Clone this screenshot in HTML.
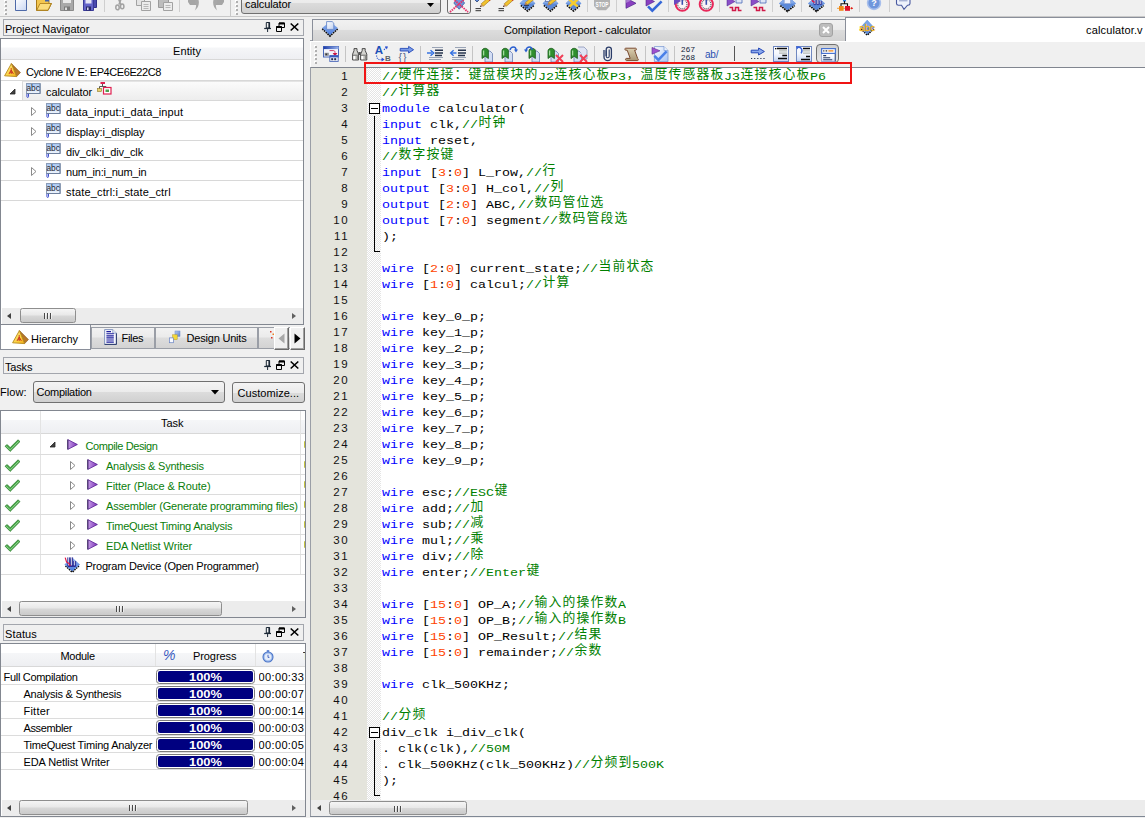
<!DOCTYPE html>
<html lang="en"><head><meta charset="utf-8"><title>Quartus II - calculator</title>
<style>
html,body{margin:0;padding:0}
body{width:1145px;height:818px;overflow:hidden;background:#f0f0f0;position:relative;font:11px/20px "Liberation Sans",sans-serif;color:#000}
div,span.t,i,b.a{position:absolute;box-sizing:content-box}
.t{white-space:nowrap;line-height:20px;height:20px}
svg{display:block;overflow:visible}

#code{left:311px;top:68px;width:834px;height:732px;background:#fff;overflow:hidden}
#gut{left:0;top:0;width:56px;height:732px;background:#e4e4dc}
#fm{left:56px;top:0;width:14px;height:732px;background:repeating-conic-gradient(#fff 0 25%,#e4e4e4 0 50%) 0 0/2px 2px}
.ln{left:0;width:38.2px;height:16px;text-align:right;font:11.5px/16px "Liberation Sans",sans-serif;letter-spacing:1.6px;color:#111;margin-top:-.5px}
.cl{left:71px;height:16px;margin-top:1px;white-space:pre;font:13.333px/16px "Liberation Mono",monospace;color:#000;transform:scaleY(.88);transform-origin:0 11px}
.k{color:#0000ff}.c{color:#008000}.n{color:#ff4500}
.z{display:inline-block;position:relative;height:16px;vertical-align:top}
.zt{position:absolute;left:.6px;top:-4.1px;height:16px;line-height:16px;white-space:nowrap;font-family:"Liberation Mono","Noto Sans CJK SC",monospace;font-size:12.8px;letter-spacing:1.2px;color:inherit;transform:scaleY(1.1367);transform-origin:0 0}
.fb{left:58px;width:9px;height:9px;border:1px solid #000;background:#fff}
.fb i{position:absolute;left:1px;top:4px;width:7px;height:1px;background:#000}
.fl{left:63px;width:1px;background:#000}
.ft{left:63px;width:6px;height:1px;background:#000}

.ic{position:absolute}
#tsep{left:0;top:16px;width:1145px;height:1px;background:#c9c9c9}
.vs{width:1px;background:#cfcfcf}
.combo{border:1px solid #707070;border-radius:3px;background:linear-gradient(#f4f4f4,#ebebeb 50%,#dcdcdc 51%,#d0d0d0)}
#tabbar{left:310px;top:40px;width:835px;height:1px;background:#9a9ea6}
#tab1{left:312px;top:19px;width:532px;height:21px;border:1px solid #8a8f9a;border-bottom:0;background:linear-gradient(#f1f1f1,#ebebeb 45%,#dcdcdc 50%,#d2d2d2)}
#tab2{left:845px;top:17px;width:300px;height:24px;border-top:1px solid #8a8f9a;border-left:1px solid #8a8f9a;background:#fff}
#etb{left:310px;top:41px;width:835px;height:26px;background:#f0f0f0;border-top:1px solid #fff;border-left:1px solid #fff;box-sizing:border-box}
#etbl{left:310px;top:67px;width:835px;height:1px;background:#80858f}
#edl{left:310px;top:67px;width:1px;height:750px;background:#9a9ea6}
#edb{left:310px;top:816px;width:835px;height:1px;background:#7f8794}
#hsb{left:311px;top:800px;width:834px;height:16px;background:#ececec}
.thumb{border:1px solid #8e8e8e;border-radius:2.5px;background:linear-gradient(#f5f5f5,#e8e8e8 48%,#d8d8d8 52%,#cacaca);box-sizing:border-box}
.thumb i{top:4px;width:1px;height:6px;background:#4a4a4a;box-shadow:1px 0 0 rgba(255,255,255,.55)}
.arl{width:0;height:0;border:3.5px solid transparent;border-right:4.5px solid #404040;border-left:0;margin-top:.5px}
.arr{width:0;height:0;border:3.5px solid transparent;border-left:4.5px solid #404040;border-right:0;margin-top:.5px}
.xbtn{left:819px;top:23px;width:14px;height:14px;border-radius:3px;background:#bdbdbd;border:1px solid #a2a2a2;box-sizing:border-box}
.pressed{border:1px solid #6c6c6c;border-radius:3px;background:linear-gradient(#d8d8d8,#e6e6e6);box-sizing:border-box}

.ttl{left:3px;width:299px;height:15px;border:1px solid #a3a6ad;background:#f0f0f0}
.pane{background:#fff;border:1px solid #828790;box-sizing:border-box;overflow:hidden}
.hdr{left:0;background:linear-gradient(#fff,#fff 42%,#f5f6f8 43%,#eeeff2);border-bottom:1px solid #d8d8d8}
.rl{left:0;height:1px;background:#dcdcdc}
.cs{width:1px;background:#e3e3e3}
.sb{background:#ececec}
.tabA{left:0;top:325px;width:91px;height:25px;background:#fff;border:1px solid #8a8f9a;border-top:0;box-sizing:border-box}
.tabI{top:327px;height:22px;border:1px solid #9a9ea6;box-sizing:border-box;background:linear-gradient(#f2f2f2,#ebebeb 45%,#dddddd 50%,#d3d3d3)}
.btn3{top:327px;width:15px;height:23px;background:#f0f0f0;border:1px solid;border-color:#fff #696969 #696969 #fff;box-sizing:border-box;box-shadow:inset -1px -1px 0 #a0a0a0}
.btn{border:1px solid #707070;border-radius:3px;background:linear-gradient(#f4f4f4,#ebebeb 50%,#dcdcdc 51%,#d0d0d0);box-sizing:border-box}
.g{color:#0a7d0a}
.pb{left:156px;width:99px;height:15px;border:1px solid #7c7c7c;border-radius:3.5px;background:#fff;box-sizing:border-box}
.pb i{left:1px;top:1px;width:95px;height:11px;background:#000080;border-radius:2px}
.pb b{position:absolute;left:0;width:97px;top:-3.5px;text-align:center;color:#fff;font-weight:bold;font-size:11px;line-height:20px;transform:scaleX(1.17)}
</style></head>
<body>
<svg width="0" height="0" style="position:absolute"><defs><linearGradient id="gnew" x1="0" y1="0" x2="1" y2="1"><stop offset="0" stop-color="#fff"/><stop offset="1" stop-color="#c9d6f2"/></linearGradient><linearGradient id="gdi" x1="0" y1="0" x2="0" y2="1"><stop offset="0" stop-color="#9ab8ec"/><stop offset="1" stop-color="#4a7ce0"/></linearGradient><linearGradient id="gpp" x1="0" y1="0" x2="1" y2="1"><stop offset="0" stop-color="#fff"/><stop offset="1" stop-color="#c0d0f0"/></linearGradient><linearGradient id="gtb" x1="0" y1="0" x2="1" y2="0"><stop offset="0" stop-color="#1c3ca8"/><stop offset="1" stop-color="#9ab4ec"/></linearGradient><linearGradient id="gsc" x1="0" y1="0" x2="0" y2="1"><stop offset="0" stop-color="#dccfb0"/><stop offset="1" stop-color="#a89674"/></linearGradient><linearGradient id="gpg" x1="0" y1="0" x2="1" y2="1"><stop offset="0" stop-color="#fff"/><stop offset="1" stop-color="#a8c4f4"/></linearGradient><linearGradient id="glist" x1="0" y1="0" x2="0" y2="1"><stop offset="0" stop-color="#fff"/><stop offset=".5" stop-color="#f4f7fd"/><stop offset="1" stop-color="#c4d4f2"/></linearGradient><linearGradient id="gw" x1="0" y1="0" x2="1" y2="1"><stop offset="0" stop-color="#fff0a0"/><stop offset=".6" stop-color="#fbd040"/><stop offset="1" stop-color="#f0a818"/></linearGradient><linearGradient id="gabc" x1="0" y1="0" x2="0" y2="1"><stop offset="0" stop-color="#a4c4f0"/><stop offset=".55" stop-color="#d4e4f8"/><stop offset="1" stop-color="#eef4fc"/></linearGradient><linearGradient id="gdu" x1="0" y1="0" x2="1" y2="1"><stop offset="0" stop-color="#b8ccf0"/><stop offset="1" stop-color="#5a7ed0"/></linearGradient><linearGradient id="gpl" x1="0" y1="0" x2="1" y2="0"><stop offset="0" stop-color="#c9a0e8"/><stop offset="1" stop-color="#7a2fb8"/></linearGradient></defs></svg>
<div id="code">
<div id="gut"></div><div id="fm"></div>
<div class="ln" style="top:0px">1</div>
<div class="cl" style="top:0px"><span class="c">//<span class="z" style="width:140px"><span class="zt">硬件连接：键盘模块的</span></span>J2<span class="z" style="width:56px"><span class="zt">连核心板</span></span>P3<span class="z" style="width:98px"><span class="zt">，温度传感器板</span></span>J3<span class="z" style="width:70px"><span class="zt">连接核心板</span></span>P6</span></div>
<div class="ln" style="top:16px">2</div>
<div class="cl" style="top:16px"><span class="c">//<span class="z" style="width:42px"><span class="zt">计算器</span></span></span></div>
<div class="ln" style="top:32px">3</div>
<div class="cl" style="top:32px"><span class="k">module</span> calculator(</div>
<div class="ln" style="top:48px">4</div>
<div class="cl" style="top:48px"><span class="k">input</span> clk,<span class="c">//<span class="z" style="width:28px"><span class="zt">时钟</span></span></span></div>
<div class="ln" style="top:64px">5</div>
<div class="cl" style="top:64px"><span class="k">input</span> reset,</div>
<div class="ln" style="top:80px">6</div>
<div class="cl" style="top:80px"><span class="c">//<span class="z" style="width:56px"><span class="zt">数字按键</span></span></span></div>
<div class="ln" style="top:96px">7</div>
<div class="cl" style="top:96px"><span class="k">input</span> [<span class="n">3</span>:<span class="n">0</span>] L_row,<span class="c">//<span class="z" style="width:14px"><span class="zt">行</span></span></span></div>
<div class="ln" style="top:112px">8</div>
<div class="cl" style="top:112px"><span class="k">output</span> [<span class="n">3</span>:<span class="n">0</span>] H_col,<span class="c">//<span class="z" style="width:14px"><span class="zt">列</span></span></span></div>
<div class="ln" style="top:128px">9</div>
<div class="cl" style="top:128px"><span class="k">output</span> [<span class="n">2</span>:<span class="n">0</span>] ABC,<span class="c">//<span class="z" style="width:70px"><span class="zt">数码管位选</span></span></span></div>
<div class="ln" style="top:144px">10</div>
<div class="cl" style="top:144px"><span class="k">output</span> [<span class="n">7</span>:<span class="n">0</span>] segment<span class="c">//<span class="z" style="width:70px"><span class="zt">数码管段选</span></span></span></div>
<div class="ln" style="top:160px">11</div>
<div class="cl" style="top:160px">);</div>
<div class="ln" style="top:176px">12</div>
<div class="ln" style="top:192px">13</div>
<div class="cl" style="top:192px"><span class="k">wire</span> [<span class="n">2</span>:<span class="n">0</span>] current_state;<span class="c">//<span class="z" style="width:56px"><span class="zt">当前状态</span></span></span></div>
<div class="ln" style="top:208px">14</div>
<div class="cl" style="top:208px"><span class="k">wire</span> [<span class="n">1</span>:<span class="n">0</span>] calcul;<span class="c">//<span class="z" style="width:28px"><span class="zt">计算</span></span></span></div>
<div class="ln" style="top:224px">15</div>
<div class="ln" style="top:240px">16</div>
<div class="cl" style="top:240px"><span class="k">wire</span> key_0_p;</div>
<div class="ln" style="top:256px">17</div>
<div class="cl" style="top:256px"><span class="k">wire</span> key_1_p;</div>
<div class="ln" style="top:272px">18</div>
<div class="cl" style="top:272px"><span class="k">wire</span> key_2_p;</div>
<div class="ln" style="top:288px">19</div>
<div class="cl" style="top:288px"><span class="k">wire</span> key_3_p;</div>
<div class="ln" style="top:304px">20</div>
<div class="cl" style="top:304px"><span class="k">wire</span> key_4_p;</div>
<div class="ln" style="top:320px">21</div>
<div class="cl" style="top:320px"><span class="k">wire</span> key_5_p;</div>
<div class="ln" style="top:336px">22</div>
<div class="cl" style="top:336px"><span class="k">wire</span> key_6_p;</div>
<div class="ln" style="top:352px">23</div>
<div class="cl" style="top:352px"><span class="k">wire</span> key_7_p;</div>
<div class="ln" style="top:368px">24</div>
<div class="cl" style="top:368px"><span class="k">wire</span> key_8_p;</div>
<div class="ln" style="top:384px">25</div>
<div class="cl" style="top:384px"><span class="k">wire</span> key_9_p;</div>
<div class="ln" style="top:400px">26</div>
<div class="ln" style="top:416px">27</div>
<div class="cl" style="top:416px"><span class="k">wire</span> esc;<span class="c">//ESC<span class="z" style="width:14px"><span class="zt">键</span></span></span></div>
<div class="ln" style="top:432px">28</div>
<div class="cl" style="top:432px"><span class="k">wire</span> add;<span class="c">//<span class="z" style="width:14px"><span class="zt">加</span></span></span></div>
<div class="ln" style="top:448px">29</div>
<div class="cl" style="top:448px"><span class="k">wire</span> sub;<span class="c">//<span class="z" style="width:14px"><span class="zt">减</span></span></span></div>
<div class="ln" style="top:464px">30</div>
<div class="cl" style="top:464px"><span class="k">wire</span> mul;<span class="c">//<span class="z" style="width:14px"><span class="zt">乘</span></span></span></div>
<div class="ln" style="top:480px">31</div>
<div class="cl" style="top:480px"><span class="k">wire</span> div;<span class="c">//<span class="z" style="width:14px"><span class="zt">除</span></span></span></div>
<div class="ln" style="top:496px">32</div>
<div class="cl" style="top:496px"><span class="k">wire</span> enter;<span class="c">//Enter<span class="z" style="width:14px"><span class="zt">键</span></span></span></div>
<div class="ln" style="top:512px">33</div>
<div class="ln" style="top:528px">34</div>
<div class="cl" style="top:528px"><span class="k">wire</span> [<span class="n">15</span>:<span class="n">0</span>] OP_A;<span class="c">//<span class="z" style="width:84px"><span class="zt">输入的操作数</span></span>A</span></div>
<div class="ln" style="top:544px">35</div>
<div class="cl" style="top:544px"><span class="k">wire</span> [<span class="n">15</span>:<span class="n">0</span>] OP_B;<span class="c">//<span class="z" style="width:84px"><span class="zt">输入的操作数</span></span>B</span></div>
<div class="ln" style="top:560px">36</div>
<div class="cl" style="top:560px"><span class="k">wire</span> [<span class="n">15</span>:<span class="n">0</span>] OP_Result;<span class="c">//<span class="z" style="width:28px"><span class="zt">结果</span></span></span></div>
<div class="ln" style="top:576px">37</div>
<div class="cl" style="top:576px"><span class="k">wire</span> [<span class="n">15</span>:<span class="n">0</span>] remainder;<span class="c">//<span class="z" style="width:28px"><span class="zt">余数</span></span></span></div>
<div class="ln" style="top:592px">38</div>
<div class="ln" style="top:608px">39</div>
<div class="cl" style="top:608px"><span class="k">wire</span> clk_500KHz;</div>
<div class="ln" style="top:624px">40</div>
<div class="ln" style="top:640px">41</div>
<div class="cl" style="top:640px"><span class="c">//<span class="z" style="width:28px"><span class="zt">分频</span></span></span></div>
<div class="ln" style="top:656px">42</div>
<div class="cl" style="top:656px">div_clk i_div_clk(</div>
<div class="ln" style="top:672px">43</div>
<div class="cl" style="top:672px">. clk(clk),<span class="c">//50M</span></div>
<div class="ln" style="top:688px">44</div>
<div class="cl" style="top:688px">. clk_500KHz(clk_500KHz)<span class="c">//<span class="z" style="width:42px"><span class="zt">分频到</span></span>500K</span></div>
<div class="ln" style="top:704px">45</div>
<div class="cl" style="top:704px">);</div>
<div class="ln" style="top:720px">46</div>
<div class="fb" style="top:35px"><i></i></div><div class="fl" style="top:48px;height:136px"></div><div class="ft" style="top:183px"></div>
<div class="fb" style="top:659px"><i></i></div><div class="fl" style="top:672px;height:56px"></div><div class="ft" style="top:727px"></div>
</div>
<div style="left:364px;top:62px;width:484px;height:18px;border:2px solid #f01414;z-index:9"></div>
<svg class="ic" style="left:4px;top:0px" width="3" height="15" viewBox="0 0 3 15"><rect x="0" y="0" width="2" height="2" fill="#fff"/><rect x="1" y="1" width="2" height="2" fill="#b0b0b0"/><rect x="0" y="4" width="2" height="2" fill="#fff"/><rect x="1" y="5" width="2" height="2" fill="#b0b0b0"/><rect x="0" y="8" width="2" height="2" fill="#fff"/><rect x="1" y="9" width="2" height="2" fill="#b0b0b0"/><rect x="0" y="12" width="2" height="2" fill="#fff"/><rect x="1" y="13" width="2" height="2" fill="#b0b0b0"/></svg>
<svg class="ic" style="left:15px;top:0px" width="13" height="11" viewBox="0 0 13 11"><path d="M.5-1V10.5H11.5V-1" fill="url(#gnew)" stroke="#4f6aa8"/></svg>
<svg class="ic" style="left:36px;top:0px" width="16" height="11" viewBox="0 0 16 11"><path d="M.5-1V10.5H12L15.5 3.5H13V-1" fill="#f3c64f" stroke="#a87a18"/><path d="M.8 10.2L4 3.5H15.2L12 10.2Z" fill="#fbdc7c" stroke="#a87a18" stroke-width=".8"/><path d="M9 -1h4v2.5h-4z" fill="#3f62b0"/></svg>
<svg class="ic" style="left:60px;top:0px" width="14" height="11" viewBox="0 0 14 11"><path d="M.5-1V10.5H13.5V-1" fill="#a9a9a9" stroke="#8b8b8b"/><rect x="3" y="-1" width="8" height="4" fill="#e9e9e9"/><rect x="4" y="6.5" width="6" height="4" fill="#7a7a7a"/><rect x="5" y="7.5" width="2" height="2.5" fill="#dcdcdc"/></svg>
<svg class="ic" style="left:83px;top:0px" width="14" height="11" viewBox="0 0 14 11"><path d="M4-1V7.5H13.5V-1" fill="#4a4aae" stroke="#30308a"/><path d="M.5-1V10.5H10.5V-1" fill="#6464c8" stroke="#3a3a98"/><rect x="2.5" y="-1" width="6" height="4.5" fill="#e6e6f6"/><rect x="3" y="6.5" width="5" height="4" fill="#2a2a6a"/><rect x="4" y="7.5" width="1.6" height="2.5" fill="#d0d0e8"/></svg>
<div class="vs" style="left:104px;top:0;height:12px"></div>
<svg class="ic" style="left:115px;top:0px" width="10" height="11" viewBox="0 0 10 11"><path d="M3.6-1L5.8 4.6M6-1L4 4.6" stroke="#a2a2a2" stroke-width="1.6" fill="none"/><ellipse cx="2.5" cy="7.4" rx="1.7" ry="2.4" fill="none" stroke="#a2a2a2" stroke-width="1.5"/><ellipse cx="7.2" cy="6.4" rx="1.7" ry="2.3" fill="none" stroke="#a2a2a2" stroke-width="1.5"/></svg>
<svg class="ic" style="left:136px;top:0px" width="15" height="11" viewBox="0 0 15 11"><path d="M.5-1V5.5H8.5V-1" fill="#e4e4e4" stroke="#a2a2a2"/><path d="M5.5 1.5H14.5V10.5H5.5Z" fill="#ececec" stroke="#a2a2a2"/><path d="M7.5 4.5h5M7.5 6.5h5M7.5 8.5h5" stroke="#b8b8b8"/></svg>
<svg class="ic" style="left:158px;top:0px" width="15" height="11" viewBox="0 0 15 11"><path d="M.5-1V7.5H10.5V-1" fill="#bdbdbd" stroke="#9a9a9a"/><path d="M5.5 2.5H14.5V10.5H5.5Z" fill="#ececec" stroke="#a2a2a2"/><path d="M7.5 5.5h5M7.5 7.5h5" stroke="#b8b8b8"/></svg>
<div class="vs" style="left:179px;top:0;height:12px"></div>
<svg class="ic" style="left:188px;top:0px" width="12" height="11" viewBox="0 0 12 11"><path d="M0-1V2L2 5H8V-1Z" fill="#a6a6a6"/><path d="M7-1H10.2C11.8 3 10.6 7.8 6.8 10.6 8.4 7 8.6 4 7 2.5Z" fill="#a8a8a8"/></svg>
<svg class="ic" style="left:212px;top:0px" width="12" height="11" viewBox="0 0 12 11"><path d="M12-1V2L10 5H4V-1Z" fill="#a6a6a6"/><path d="M5-1H1.8C.2 3 1.4 7.8 5.2 10.6 3.6 7 3.4 4 5 2.5Z" fill="#a8a8a8"/></svg>
<div class="vs" style="left:230px;top:0;height:16px;background:#c8c8c8"></div>
<svg class="ic" style="left:235px;top:0px" width="3" height="15" viewBox="0 0 3 15"><rect x="0" y="0" width="2" height="2" fill="#fff"/><rect x="1" y="1" width="2" height="2" fill="#b0b0b0"/><rect x="0" y="4" width="2" height="2" fill="#fff"/><rect x="1" y="5" width="2" height="2" fill="#b0b0b0"/><rect x="0" y="8" width="2" height="2" fill="#fff"/><rect x="1" y="9" width="2" height="2" fill="#b0b0b0"/><rect x="0" y="12" width="2" height="2" fill="#fff"/><rect x="1" y="13" width="2" height="2" fill="#b0b0b0"/></svg>
<div class="combo" style="left:241px;top:-9px;width:198px;height:21px"></div>
<span class="t" style="left:245px;top:-6px;letter-spacing:-0.098px">calculator</span>
<svg class="ic" style="left:427px;top:3px" width="8" height="4" viewBox="0 0 8 4"><path d="M0 0H7L3.5 4Z" fill="#000"/></svg>
<div class="pressed" style="left:447px;top:-9px;width:24px;height:23px;background:#f3f3f3"></div>
<svg class="ic" style="left:451px;top:0px" width="16" height="12" viewBox="0 0 16 12"><path d="M8.2-3L13.6 3 8.2 9.2 2.8 3Z" fill="#7098dc" stroke="#3a5aa0" stroke-width=".8"/><path d="M-1 12L16-3M0-3L17 12" stroke="#e8306a" stroke-width="1.9" stroke-dasharray="1.5 .9"/></svg>
<svg class="ic" style="left:474px;top:0px" width="18" height="12" viewBox="0 0 18 12"><path d="M0-1L3 2 6-1Z" fill="#5a88d8" stroke="#1c3468" stroke-width=".7"/><path d="M15-3L7.2 3.8 9.4 6.2 18-1.5Z" fill="#f2c22e" stroke="#9a7418" stroke-width=".6"/><path d="M14-2.5L16.5 0" stroke="#d02020" stroke-width="2.6"/><path d="M7.2 3.8L6 7 9.4 6.2Z" fill="#c89060"/><path d="M6 7L6.5 5.6 7.5 6.6Z" fill="#222"/><path d="M1.5 8.6h5.5M1.5 10.7h5.5" stroke="#333" stroke-width="1"/></svg>
<svg class="ic" style="left:497px;top:0px" width="18" height="12" viewBox="0 0 18 12"><path d="M15-3L7.2 3.8 9.4 6.2 18-1.5Z" fill="#f2c22e" stroke="#9a7418" stroke-width=".6"/><path d="M14-2.5L16.5 0" stroke="#d02020" stroke-width="2.6"/><path d="M7.2 3.8L6 7 9.4 6.2Z" fill="#c89060"/><path d="M6 7L6.5 5.6 7.5 6.6Z" fill="#222"/><path d="M1.5 8.6h5.5M1.5 10.7h5.5" stroke="#333" stroke-width="1"/></svg>
<svg class="ic" style="left:519px;top:0px" width="17" height="12" viewBox="0 0 17 12"><path d="M2 5.2L8.5 10.8 15 5.2" fill="none" stroke="#0a0a0a" stroke-width="2" stroke-dasharray="1.7 .8"/><path d="M8.5-4L16.4 3.4 8.5 10 .6 3.4Z" fill="#5a88d8"/><path d="M8.5-4L16.4 3.4H.6Z" fill="#82a8e8"/><path d="M13-3L6.4 2.6 8.4 4.8 15.6-1Z" fill="#f2c22e" stroke="#9a7418" stroke-width=".5"/><path d="M6.4 2.6L5.4 5.6 8.4 4.8Z" fill="#c08050"/><path d="M5 5.4h5M6 7.2h3" stroke="#1c2c50" stroke-width=".9"/></svg>
<svg class="ic" style="left:542px;top:0px" width="17" height="12" viewBox="0 0 17 12"><path d="M2 5.2L8.5 10.8 15 5.2" fill="none" stroke="#0a0a0a" stroke-width="2" stroke-dasharray="1.7 .8"/><path d="M8.5-4L16.4 3.4 8.5 10 .6 3.4Z" fill="#5a88d8"/><path d="M8.5-4L16.4 3.4H.6Z" fill="#82a8e8"/><rect x="3.4" y="-2" width="4" height="3.4" fill="#e8eefc" stroke="#4a5a90" stroke-width=".6"/><path d="M13-3L6.4 2.6 8.4 4.8 15.6-1Z" fill="#f2c22e" stroke="#9a7418" stroke-width=".5"/><path d="M6.4 2.6L5.4 5.6 8.4 4.8Z" fill="#c08050"/></svg>
<svg class="ic" style="left:565px;top:0px" width="17" height="12" viewBox="0 0 17 12"><path d="M2 5.2L8.5 10.8 15 5.2" fill="none" stroke="#0a0a0a" stroke-width="2" stroke-dasharray="1.7 .8"/><path d="M8.5-4L16.4 3.4 8.5 10 .6 3.4Z" fill="#5a88d8"/><path d="M8.5-4L16.4 3.4H.6Z" fill="#82a8e8"/><path d="M4.4-.6L12.6 6.6M12.6-.6L4.4 6.6" stroke="#f4cc30" stroke-width="2.6"/></svg>
<div class="vs" style="left:587px;top:0;height:12px"></div>
<svg class="ic" style="left:593px;top:0px" width="18" height="11" viewBox="0 0 18 11"><path d="M1-3V6L5 10.2H13L17 6V-3Z" fill="#b2b2b2"/><text x="9" y="7" font-family="Liberation Sans,sans-serif" font-weight="bold" font-size="7.4" fill="#fff" text-anchor="middle" textLength="13" lengthAdjust="spacingAndGlyphs">STOP</text></svg>
<div class="vs" style="left:616px;top:0;height:12px"></div>
<svg class="ic" style="left:622px;top:0px" width="15" height="11" viewBox="0 0 15 11"><path d="M4-2L14 3.3 4 8.3Z" fill="#8a3fc0" stroke="#4a2488" stroke-width=".7"/><path d="M4-2L9 .6 4 3Z" fill="#c0a0e0" opacity=".6"/></svg>
<svg class="ic" style="left:645px;top:0px" width="18" height="12" viewBox="0 0 18 12"><path d="M1-3L9.5 1.5 1 6Z" fill="#8a3fc0" stroke="#4a2488" stroke-width=".6"/><path d="M3 6.3L7.3 10.6 16.6 1.4" fill="none" stroke="#3568d8" stroke-width="2.6"/></svg>
<div class="vs" style="left:668px;top:0;height:12px"></div>
<svg class="ic" style="left:674px;top:0px" width="17" height="12" viewBox="0 0 17 12"><circle cx="8.3" cy="4.2" r="6.6" fill="#fbf4f6" stroke="#e8285a" stroke-width="2"/><circle cx="8.3" cy="4.2" r="4.6" fill="none" stroke="#223" stroke-width="1" stroke-dasharray="1 1"/><path d="M8.3 0V4.8" stroke="#3a50b0" stroke-width="1.6" fill="none"/><path d="M0-3L7 1 0 5Z" fill="#6a48c0"/></svg>
<svg class="ic" style="left:698px;top:0px" width="17" height="12" viewBox="0 0 17 12"><circle cx="8.3" cy="4.2" r="6.6" fill="#fbf4f6" stroke="#e8285a" stroke-width="2"/><circle cx="8.3" cy="4.2" r="4.6" fill="none" stroke="#223" stroke-width="1" stroke-dasharray="1 1"/><path d="M8.3 0V4.8" stroke="#3a50b0" stroke-width="1.6" fill="none"/></svg>
<div class="vs" style="left:719px;top:0;height:12px"></div>
<svg class="ic" style="left:726px;top:0px" width="18" height="12" viewBox="0 0 18 12"><path d="M1-3L9 1.5 1 6Z" fill="#8a4fc8" stroke="#4a2488" stroke-width=".5"/><path d="M10-2h6v5h-6z" fill="#dfe6f6" stroke="#4a6ab8" stroke-width=".8"/><path d="M3.5 7.5H6.5V10.5H9.5V7.5H12.5V10.5H15.5" fill="none" stroke="#d01848" stroke-width="1.5"/></svg>
<svg class="ic" style="left:750px;top:0px" width="18" height="12" viewBox="0 0 18 12"><path d="M1-3L9 1.5 1 6Z" fill="#8a4fc8" stroke="#4a2488" stroke-width=".5"/><path d="M10-2h6v5h-6z" fill="#dfe6f6" stroke="#4a6ab8" stroke-width=".8"/><path d="M3.5 7.5H6.5V10.5H9.5V7.5H12.5V10.5H15.5" fill="none" stroke="#d01848" stroke-width="1.5"/></svg>
<div class="vs" style="left:772px;top:0;height:12px"></div><div class="vs" style="left:801px;top:0;height:12px"></div>
<svg class="ic" style="left:778px;top:0px" width="19" height="12" viewBox="0 0 19 12"><path d="M2.4 5.4L9.5 11.2 16.6 5.4" fill="none" stroke="#0a0a0a" stroke-width="2" stroke-dasharray="1.7 .8"/><path d="M9.5-4L18 3.4 9.5 10.2 1 3.4Z" fill="#5a88d8"/><path d="M9.5-4L18 3.4H1Z" fill="#82a8e8"/><rect x="6.2" y="-2" width="6.4" height="5.6" fill="#f0f4fd" stroke="#8aa0d0" stroke-width=".7"/></svg>
<svg class="ic" style="left:807px;top:0px" width="19" height="12" viewBox="0 0 19 12"><path d="M2.4 5.4L9.5 11.2 16.6 5.4" fill="none" stroke="#0a0a0a" stroke-width="2" stroke-dasharray="1.7 .8"/><path d="M9.5-4L18 3.4 9.5 10.2 1 3.4Z" fill="#5a88d8"/><path d="M9.5-4L18 3.4H1Z" fill="#82a8e8"/><path d="M7-2V4.6H8.8V-2M10-2V4.6H11.8V-2M13 1V4.6H14.6V1" fill="#fff" stroke="#1c1c8c" stroke-width=".8"/><path d="M4.6-2L5.6 1.4 7.6 2.4" fill="none" stroke="#e01848" stroke-width="1.2"/></svg>
<div class="vs" style="left:831px;top:0;height:12px"></div>
<svg class="ic" style="left:837px;top:0px" width="17" height="12" viewBox="0 0 17 12"><rect x="6" y="-1" width="3" height="2.5" fill="#2a80e0"/><path d="M7.5 1V4M4 6.5V3.8H10.5V6.5" stroke="#111" fill="none" stroke-width="1.1"/><path d="M0 8.3H16" stroke="#e8a040" stroke-width="1"/><rect x="2" y="6" width="4.6" height="4.8" fill="#f08a18"/><rect x="8" y="6" width="5" height="4.8" fill="#e01028"/><path d="M14 7L16.2 8.3 14 9.6Z" fill="#e01028"/></svg>
<div class="vs" style="left:859px;top:0;height:12px"></div>
<svg class="ic" style="left:867px;top:0px" width="15" height="10" viewBox="0 0 15 10"><circle cx="7" cy="3" r="6.4" fill="#6f96dc" stroke="#a8bfec" stroke-width="1.6"/><text x="7" y="6.3" font-family="Liberation Sans,sans-serif" font-weight="bold" font-size="9" fill="#fff" text-anchor="middle">?</text></svg>
<div class="vs" style="left:889px;top:0;height:12px"></div>
<svg class="ic" style="left:896px;top:0px" width="15" height="11" viewBox="0 0 15 11"><path d="M.5-2V3.5C.5 5 1 5.2 2.5 5.2H5.5L8 9.4 11.5 5.2H12C13.5 5.2 14 5 14 3.5V-2" fill="#eef2fc" stroke="#4a5aa0" stroke-width="1.1"/><path d="M3 .8h8.5" stroke="#8090c0" stroke-width=".9"/></svg>
<div id="tsep"></div>
<div id="tabbar"></div><div id="tab1"></div><div id="tab2"></div>
<svg class="ic" style="left:321px;top:20px" width="18" height="18" viewBox="0 0 18 18"><path d="M1.4 8.6L9 15.8 16.6 8.6" fill="none" stroke="#0a0a0a" stroke-width="2" stroke-dasharray="1.6 .8"/><path d="M9 1.6L16.8 8 9 15 1.2 8Z" fill="url(#gdi)"/><path d="M5.6 1.6H11.2L12.8 3.2V9.4H5.6Z" fill="url(#gpp)" stroke="#6a8ac8" stroke-width=".9"/></svg>
<span class="t" style="left:504px;top:19.5px;letter-spacing:-0.124px">Compilation Report - calculator</span>
<div class="xbtn"></div>
<svg class="ic" style="left:822px;top:26px" width="8" height="8" viewBox="0 0 8 8"><path d="M1 1L7 7M7 1L1 7" stroke="#fff" stroke-width="2"/></svg>
<svg class="ic" style="left:859px;top:19px" width="17" height="18" viewBox="0 0 17 18"><path d="M2 9.6L8.2 16 14.4 9.6" fill="none" stroke="#0a0a0a" stroke-width="1.8" stroke-dasharray="1.6 .8"/><path d="M8.2 .9L15 8.5 8.2 15.6 1.4 8.5Z" fill="#5a8ad8"/><path d="M8.2 .9L15 8.5H1.4Z" fill="#7aa4e6"/><text x="8.2" y="11.9" font-family="Liberation Sans,sans-serif" font-size="9.8" fill="#f8b414" stroke="#f8b414" stroke-width=".3" text-anchor="middle" textLength="16" lengthAdjust="spacingAndGlyphs">abc</text></svg>
<span class="t" style="left:1086px;top:19.5px;letter-spacing:0.143px">calculator.v</span>
<div id="etb"></div><div id="etbl"></div><div id="edl"></div>
<svg class="ic" style="left:314px;top:45px" width="3" height="19" viewBox="0 0 3 19"><rect x="0" y="0" width="2" height="2" fill="#fff"/><rect x="1" y="1" width="2" height="2" fill="#b0b0b0"/><rect x="0" y="4" width="2" height="2" fill="#fff"/><rect x="1" y="5" width="2" height="2" fill="#b0b0b0"/><rect x="0" y="8" width="2" height="2" fill="#fff"/><rect x="1" y="9" width="2" height="2" fill="#b0b0b0"/><rect x="0" y="12" width="2" height="2" fill="#fff"/><rect x="1" y="13" width="2" height="2" fill="#b0b0b0"/><rect x="0" y="16" width="2" height="2" fill="#fff"/><rect x="1" y="17" width="2" height="2" fill="#b0b0b0"/></svg>
<svg class="ic" style="left:323px;top:46px" width="16" height="16" viewBox="0 0 16 16"><rect x=".5" y=".5" width="15" height="10.5" fill="#f4f6fc" stroke="#4a68b8"/><rect x=".5" y=".5" width="15" height="2.6" fill="url(#gtb)"/><rect x="1.6" y="6.8" width="4.2" height="3" fill="#8a8c92"/><rect x="2.6" y="7.6" width="1.2" height="1.6" fill="#222"/><path d="M6.5 4.6H10.2C11.6 4.6 12 5.2 12 6.4V8" stroke="#d04068" stroke-width="1" fill="none"/><path d="M9.6 7H14.4L12 10.2Z" fill="#c81848"/><rect x="6.8" y="9.6" width="8.4" height="5.8" fill="#f4f6fc" stroke="#4a68b8" stroke-width=".9"/><rect x="6.8" y="9.4" width="8.4" height="2" fill="#3a5ac0"/><rect x="8.2" y="12.2" width="2" height="2" fill="#222c50"/><rect x="11.2" y="12.2" width="2" height="2" fill="#222c50"/></svg>
<div class="vs" style="left:345px;top:46px;height:16px;background:#c4c4c4"></div>
<svg class="ic" style="left:352px;top:47px" width="16" height="14" viewBox="0 0 16 14"><path d="M0.6 13V7.2L2 3.6V1.6H5V3.6L6.6 7.2V13Z" fill="#d4d4d0" stroke="#3c3c3c" stroke-width=".9"/><path d="M0.6 8.2H6.6" stroke="#555" stroke-width=".8"/><path d="M2.2 9V12.2" stroke="#fff" stroke-width="1.6"/><path d="M5.3 9V12.4" stroke="#8a8a86" stroke-width="1.4"/><path d="M8.6 13V7.2L10.2 3.6V1.6H13.2V3.6L14.8 7.2V13Z" fill="#d4d4d0" stroke="#3c3c3c" stroke-width=".9"/><path d="M8.6 8.2H14.8" stroke="#555" stroke-width=".8"/><path d="M10.2 9V12.2" stroke="#fff" stroke-width="1.6"/><path d="M13.4 9V12.4" stroke="#8a8a86" stroke-width="1.4"/><rect x="6.4" y="5" width="2.4" height="3" fill="#555"/></svg>
<svg class="ic" style="left:375px;top:46px" width="17" height="17" viewBox="0 0 17 17"><text x="-.3" y="8" font-family="Liberation Sans,sans-serif" font-weight="bold" font-size="11.5" fill="#1c50b8">A</text><text x="10" y="15" font-family="Liberation Sans,sans-serif" font-weight="bold" font-size="8" fill="#5c6468">B</text><path d="M1.6 9.5C1.6 13 4 14.2 7 13.6" fill="none" stroke="#2a50d0" stroke-width="1.1" stroke-dasharray="1.1 1.1"/><path d="M6.6 11.6L9.6 13.6 6.6 15.6Z" fill="#2a50d0"/><path d="M9.2 4C9.6 2.4 10.6 1.6 12 1.4" fill="none" stroke="#2a50d0" stroke-width="1.1" stroke-dasharray="1.1 1.1"/><path d="M10 .2L13 .6 11.8 3.4Z" fill="#2a50d0"/></svg>
<svg class="ic" style="left:399px;top:46px" width="16" height="17" viewBox="0 0 16 17"><path d="M1.2 2.4H9.6V.4L14.6 3.7 9.6 7V5H1.2Z" fill="#7a9ce8" stroke="#2448b8" stroke-width=".9"/><text x="-.6" y="15.4" font-family="Liberation Sans,sans-serif" font-size="10.5" fill="#54648a" letter-spacing="1.2">{}</text></svg>
<div class="vs" style="left:420px;top:46px;height:16px;background:#c4c4c4"></div>
<svg class="ic" style="left:427px;top:47px" width="17" height="14" viewBox="0 0 17 14"><path d="M5 .5H16M2 10.5H16M2 12.5H14" stroke="#9aa4b6" stroke-width="1"/><path d="M8 3.3H16M8 6H16M8 8.6H15" stroke="#26344e" stroke-width="1.5"/><path d="M0 6H5" stroke="#2a6ae0" stroke-width="1.4"/><path d="M3.5 3.2L6.8 6 3.5 8.8" fill="none" stroke="#2a6ae0" stroke-width="1.3"/></svg>
<svg class="ic" style="left:450px;top:47px" width="17" height="14" viewBox="0 0 17 14"><path d="M5 .5H16M2 10.5H16M2 12.5H14" stroke="#9aa4b6" stroke-width="1"/><path d="M8 3.3H16M8 6H16M8 8.6H15" stroke="#26344e" stroke-width="1.5"/><path d="M1 6H6.5" stroke="#2a6ae0" stroke-width="1.4"/><path d="M3.6 3.2L.6 6 3.6 8.8" fill="none" stroke="#2a6ae0" stroke-width="1.3"/></svg>
<div class="vs" style="left:472px;top:46px;height:16px;background:#c4c4c4"></div>
<svg class="ic" style="left:481px;top:46px" width="20" height="17" viewBox="0 0 20 17"><path d="M4 5h5l2.5 2.5v8.5h-7.5z" fill="#d4def4" stroke="#6a80b0" stroke-width=".8"/><path d="M1 5c0-3.6 6.4-3.6 6.4 0v7.5l-3.2-2.2-3.2 2.2z" fill="#2f8f2f" stroke="#1a5a1a" stroke-width=".8"/><path d="M2.6 4.5v5" stroke="#a4dca0" stroke-width="1.3"/></svg>
<svg class="ic" style="left:501px;top:46px" width="20" height="17" viewBox="0 0 20 17"><path d="M4 5h5l2.5 2.5v8.5h-7.5z" fill="#d4def4" stroke="#6a80b0" stroke-width=".8"/><path d="M1 5c0-3.6 6.4-3.6 6.4 0v7.5l-3.2-2.2-3.2 2.2z" fill="#2f8f2f" stroke="#1a5a1a" stroke-width=".8"/><path d="M2.6 4.5v5" stroke="#a4dca0" stroke-width="1.3"/><path d="M9 4C10 0 15 0 15 4" fill="none" stroke="#2a5fd0" stroke-width="1.4"/><path d="M13 3.5h4l-2 3z" fill="#2a5fd0"/></svg>
<svg class="ic" style="left:524px;top:46px" width="20" height="17" viewBox="0 0 20 17"><path d="M8 5h5l2.5 2.5v8.5h-7.5z" fill="#d4def4" stroke="#6a80b0" stroke-width=".8"/><path d="M5 5c0-3.6 6.4-3.6 6.4 0v7.5l-3.2-2.2-3.2 2.2z" fill="#2f8f2f" stroke="#1a5a1a" stroke-width=".8"/><path d="M6.6 4.5v5" stroke="#a4dca0" stroke-width="1.3"/><path d="M2 4C3 0 8 0 8 4" fill="none" stroke="#2a5fd0" stroke-width="1.4"/><path d="M0 3.5h4l-2 3z" fill="#2a5fd0"/></svg>
<svg class="ic" style="left:547px;top:46px" width="20" height="17" viewBox="0 0 20 17"><path d="M4 5h5l2.5 2.5v8.5h-7.5z" fill="#d4def4" stroke="#6a80b0" stroke-width=".8"/><path d="M1 5c0-3.6 6.4-3.6 6.4 0v7.5l-3.2-2.2-3.2 2.2z" fill="#2f8f2f" stroke="#1a5a1a" stroke-width=".8"/><path d="M2.6 4.5v5" stroke="#a4dca0" stroke-width="1.3"/><path d="M9 9l7 7M16 9l-7 7" stroke="#f04058" stroke-width="2"/></svg>
<svg class="ic" style="left:570px;top:46px" width="20" height="17" viewBox="0 0 20 17"><path d="M4 5h5l2.5 2.5v8.5h-7.5z" fill="#d4def4" stroke="#6a80b0" stroke-width=".8"/><path d="M1 5c0-3.6 6.4-3.6 6.4 0v7.5l-3.2-2.2-3.2 2.2z" fill="#2f8f2f" stroke="#1a5a1a" stroke-width=".8"/><path d="M2.6 4.5v5" stroke="#a4dca0" stroke-width="1.3"/><path d="M8 1h6l3 3v9h-3" fill="#dfe4f4" stroke="#8a96b8" stroke-width=".8"/><path d="M10 9l7 7M17 9l-7 7" stroke="#f04058" stroke-width="2"/></svg>
<div class="vs" style="left:594px;top:46px;height:16px;background:#c4c4c4"></div>
<svg class="ic" style="left:603px;top:46px" width="10" height="16" viewBox="0 0 10 16"><path d="M6.2 3.6V10.2a1.5 1.5 0 0 1-3 0V4.2" fill="none" stroke="#2a3c68" stroke-width="1.1"/><path d="M3.2 10V3.8a2.6 2.6 0 0 1 5.2 0V11a3.7 3.7 0 0 1-7.4 0V4" fill="none" stroke="#2a3c68" stroke-width="1.3"/></svg>
<svg class="ic" style="left:624px;top:47px" width="16" height="15" viewBox="0 0 16 15"><path d="M1.6 1.2C.6 1.2 .6 3.2 1.8 3.2H3.2L6.2 11.4H2.4C1.2 11.4 1.2 13.6 2.6 13.6H13.4C14.8 13.6 14.4 11.6 13.6 11.4L10.6 3.2H11.6C12.8 3.2 12.6 1.2 11.6 1.2Z" fill="url(#gsc)" stroke="#7a4a30" stroke-width="1"/></svg>
<div class="vs" style="left:645px;top:46px;height:16px;background:#c4c4c4"></div>
<svg class="ic" style="left:651px;top:46px" width="18" height="17" viewBox="0 0 18 17"><path d="M3.4 .6H13L17 4.6V15.6H3.4Z" fill="url(#gpg)" stroke="#7a98d0" stroke-width=".8"/><path d="M13 .6V4.6H17" fill="#e8f0fc" stroke="#7a98d0" stroke-width=".7"/><path d="M1 1.4L9 4.8 1 8.2Z" fill="#a050d0" stroke="#5a3090" stroke-width=".6"/><path d="M3.4 9.8L7.4 13.8 15.6 5.4" fill="none" stroke="#4a80e8" stroke-width="2.6"/></svg>
<div class="vs" style="left:674px;top:46px;height:16px;background:#c4c4c4"></div>
<span class="t" style="left:681px;top:44px;font-size:8px;line-height:7.7px;height:16px;top:46.3px;color:#101c38;white-space:normal;width:18px;letter-spacing:.35px">267 268</span>
<span class="t" style="left:705px;top:44.5px;font-size:10px;color:#2a4fb0;letter-spacing:-.2px">ab/</span>
<div class="vs" style="left:734px;top:46px;height:15px;background:#555"></div>
<svg class="ic" style="left:750px;top:47px" width="16" height="13" viewBox="0 0 16 13"><path d="M1.2 3.2H8.6V1L14.4 4.5 8.6 8V5.8H1.2Z" fill="#8aa8ec" stroke="#2448b8" stroke-width="1"/><path d="M1 11.5H15" stroke="#26344e" stroke-width="1.2" stroke-dasharray="1.2 1.9"/></svg>
<svg class="ic" style="left:773px;top:46px" width="16" height="16" viewBox="0 0 16 16"><rect x=".5" y=".5" width="15" height="15" fill="url(#glist)" stroke="#7088c0"/><path d="M4 2.6H14M9.3 9.6H14M5 12.6H14" stroke="#0a0a0a" stroke-width="1.5"/><rect x="2" y="2" width="1.4" height="1.3" fill="#0a0a0a"/><path d="M6 4.9H14M6 7.1H14" stroke="#a4aaa4" stroke-width="1"/></svg>
<svg class="ic" style="left:796px;top:46px" width="16" height="16" viewBox="0 0 16 16"><rect x=".5" y=".5" width="15" height="15" fill="url(#glist)" stroke="#7088c0"/><path d="M7 2.6H14M10 10.6H14M5 13.6H14" stroke="#0a0a0a" stroke-width="1.5"/><path d="M7 4.9H14M7 7.1H14" stroke="#a4aaa4" stroke-width="1"/><path d="M1.6 1.4C5.4 1 7 3.4 5.2 7.4" stroke="#3a64d8" stroke-width="1.5" fill="none"/><path d="M0 .2L3.6 .6 1 3.6Z" fill="#3a64d8"/></svg>
<div class="pressed" style="left:816px;top:44px;width:23px;height:19px;border:1.5px solid #707070;border-radius:4px;background:linear-gradient(#cfcfcf,#e6e6e6)"></div>
<svg class="ic" style="left:821px;top:48px" width="15" height="14" viewBox="0 0 15 14"><rect x=".5" y="5.5" width="14" height="8" fill="url(#glist)" stroke="#8aa0d0" stroke-width=".8"/><path d="M14.2 6V13.4" stroke="#3a4a70" stroke-width="1"/><rect x=".6" y=".6" width="13.8" height="4.8" fill="#fff" stroke="#4a74d0" stroke-width="1.2"/><rect x="2.2" y="2.3" width="1.2" height="1.2" fill="#222"/><rect x="4.6" y="2.3" width="1.6" height="1.2" fill="#222"/><path d="M7.4 2.9H12.4" stroke="#f08a18" stroke-width="1.3"/><path d="M2.2 7.6H5.2M2.2 9.7H9.2M2.2 11.8H11.2" stroke="#2a3c64" stroke-width="1.1"/></svg>
<div id="hsb"></div><div id="edb"></div>
<div class="arl" style="left:317px;top:804px"></div>
<div class="thumb" style="left:329px;top:801px;width:138px;height:14px"><i style="left:64px"></i><i style="left:67px"></i><i style="left:70px"></i></div>
<div class="ttl" style="top:19px"></div>
<span class="t" style="left:5px;top:18.5px">Project Navigator</span>
<svg class="ic" style="left:264px;top:22px" width="8" height="10" viewBox="0 0 8 10"><path d="M2.3 .5H5.6V6H2.3Z" fill="#f0f0f0" stroke="#1c2836" stroke-width="1"/><path d="M5.2 .5V6" stroke="#1c2836" stroke-width="1.6"/><path d="M.2 6.5H7" stroke="#1c2836" stroke-width="1.2"/><path d="M3.6 7V10" stroke="#1c2836" stroke-width="1"/></svg><svg class="ic" style="left:276px;top:22px" width="9" height="10" viewBox="0 0 9 10"><path d="M3 1H8.5V5.5H3Z" fill="none" stroke="#000" stroke-width="1"/><path d="M3 1.5H8.5" stroke="#000" stroke-width="2"/><path d="M.5 4.5H5.5V9.5H.5Z" fill="#f0f0f0" stroke="#000" stroke-width="1"/><path d="M.5 5H5.5" stroke="#000" stroke-width="2"/></svg><svg class="ic" style="left:290px;top:23px" width="9" height="8" viewBox="0 0 9 8"><path d="M.7 .5L8.3 7.5M8.3 .5L.7 7.5" stroke="#000" stroke-width="1.6"/></svg>
<div class="pane" style="left:0px;top:38px;width:304px;height:287px;"><div class="hdr" style="top:0;width:302px;height:20px"></div><div class="rl" style="top:41px;width:302px;background:#d8d8d8"></div><div class="rl" style="top:61px;width:302px;background:#d8d8d8"></div><div class="rl" style="top:81px;width:302px;background:#d8d8d8"></div><div class="rl" style="top:101px;width:302px;background:#d8d8d8"></div><div class="rl" style="top:121px;width:302px;background:#d8d8d8"></div><div class="rl" style="top:141px;width:302px;background:#d8d8d8"></div><div class="rl" style="top:161px;width:302px;background:#d8d8d8"></div><div style="left:21px;top:42px;width:282px;height:19px;background:linear-gradient(#fbfbfb,#ededed);border-left:1px solid #dadada;border-top:1px solid #e4e4e4;box-sizing:border-box"></div></div>
<span class="t" style="left:173px;top:41px;letter-spacing:0.097px">Entity</span>
<svg class="ic" style="left:4px;top:63px" width="17" height="15" viewBox="0 0 17 15"><path d="M7.4 .6L16.4 9.6 12.6 13.6Z" fill="#b87828" stroke="#8a5a20" stroke-width=".7"/><path d="M7.4 .6L.6 12.8 12.6 13.6Z" fill="url(#gw)" stroke="#b88a18" stroke-width=".9"/><path d="M7.2 5V7M7.2 7L5 11M7.2 7L9.4 11M7.2 7V11M5.8 9.2H8.6" stroke="#c83020" stroke-width=".9" fill="none"/></svg>
<span class="t" style="left:26px;top:62px;letter-spacing:-0.422px">Cyclone IV E: EP4CE6E22C8</span>
<svg class="ic" style="left:9px;top:88px" width="7" height="7" viewBox="0 0 7 7"><path d="M6 1V6H1Z" fill="#404040" stroke="#262626" stroke-width=".8"/></svg>
<svg class="ic" style="left:26px;top:83px" width="15" height="16" viewBox="0 0 15 16"><rect x=".5" y=".5" width="13.6" height="10" fill="url(#gabc)" stroke="#8a9cb8"/><path d="M.5 10.5H14.1V.5" fill="none" stroke="#6a7c98" stroke-width=".9"/><text x="7.2" y="8.4" font-family="Liberation Sans,sans-serif" font-size="9" fill="#1c2230" text-anchor="middle" textLength="13.4" lengthAdjust="spacingAndGlyphs">abc</text><path d="M.9 11V13.6a.8 .8 0 0 0 1.6 0V11" stroke="#2a3cc8" stroke-width=".9" fill="none"/></svg>
<span class="t" style="left:46px;top:82px;letter-spacing:-0.098px">calculator</span>
<svg class="ic" style="left:97px;top:82px" width="15" height="13" viewBox="0 0 15 13"><path d="M5.5 1.5V4.5M2.5 7V4.5H9V7" stroke="#555" fill="none"/><rect x="3.5" y="0" width="4.5" height="2" fill="#e02050"/><rect x=".5" y="6.5" width="4" height="3" fill="#e8d070" stroke="#907820" stroke-width=".6"/><rect x="6.5" y="5.5" width="7.5" height="6.5" fill="#fff" stroke="#e02050" stroke-width="1.2"/><rect x="8.5" y="7.5" width="3.5" height="2.5" fill="#50a050"/></svg>
<svg class="ic" style="left:31px;top:107px" width="6" height="9" viewBox="0 0 6 9"><path d="M.5 .5L5 4.5 .5 8.5Z" fill="#fff" stroke="#8a8a8a" stroke-width="1"/></svg>
<svg class="ic" style="left:46px;top:103px" width="15" height="16" viewBox="0 0 15 16"><rect x=".5" y=".5" width="13.6" height="10" fill="url(#gabc)" stroke="#8a9cb8"/><path d="M.5 10.5H14.1V.5" fill="none" stroke="#6a7c98" stroke-width=".9"/><text x="7.2" y="8.4" font-family="Liberation Sans,sans-serif" font-size="9" fill="#1c2230" text-anchor="middle" textLength="13.4" lengthAdjust="spacingAndGlyphs">abc</text><path d="M.9 11V13.6a.8 .8 0 0 0 1.6 0V11" stroke="#2a3cc8" stroke-width=".9" fill="none"/></svg>
<span class="t" style="left:66px;top:102px;letter-spacing:0.119px">data_input:i_data_input</span>
<svg class="ic" style="left:31px;top:127px" width="6" height="9" viewBox="0 0 6 9"><path d="M.5 .5L5 4.5 .5 8.5Z" fill="#fff" stroke="#8a8a8a" stroke-width="1"/></svg>
<svg class="ic" style="left:46px;top:123px" width="15" height="16" viewBox="0 0 15 16"><rect x=".5" y=".5" width="13.6" height="10" fill="url(#gabc)" stroke="#8a9cb8"/><path d="M.5 10.5H14.1V.5" fill="none" stroke="#6a7c98" stroke-width=".9"/><text x="7.2" y="8.4" font-family="Liberation Sans,sans-serif" font-size="9" fill="#1c2230" text-anchor="middle" textLength="13.4" lengthAdjust="spacingAndGlyphs">abc</text><path d="M.9 11V13.6a.8 .8 0 0 0 1.6 0V11" stroke="#2a3cc8" stroke-width=".9" fill="none"/></svg>
<span class="t" style="left:66px;top:122px;letter-spacing:-0.094px">display:i_display</span>
<svg class="ic" style="left:46px;top:143px" width="15" height="16" viewBox="0 0 15 16"><rect x=".5" y=".5" width="13.6" height="10" fill="url(#gabc)" stroke="#8a9cb8"/><path d="M.5 10.5H14.1V.5" fill="none" stroke="#6a7c98" stroke-width=".9"/><text x="7.2" y="8.4" font-family="Liberation Sans,sans-serif" font-size="9" fill="#1c2230" text-anchor="middle" textLength="13.4" lengthAdjust="spacingAndGlyphs">abc</text><path d="M.9 11V13.6a.8 .8 0 0 0 1.6 0V11" stroke="#2a3cc8" stroke-width=".9" fill="none"/></svg>
<span class="t" style="left:66px;top:142px;letter-spacing:-0.105px">div_clk:i_div_clk</span>
<svg class="ic" style="left:31px;top:167px" width="6" height="9" viewBox="0 0 6 9"><path d="M.5 .5L5 4.5 .5 8.5Z" fill="#fff" stroke="#8a8a8a" stroke-width="1"/></svg>
<svg class="ic" style="left:46px;top:163px" width="15" height="16" viewBox="0 0 15 16"><rect x=".5" y=".5" width="13.6" height="10" fill="url(#gabc)" stroke="#8a9cb8"/><path d="M.5 10.5H14.1V.5" fill="none" stroke="#6a7c98" stroke-width=".9"/><text x="7.2" y="8.4" font-family="Liberation Sans,sans-serif" font-size="9" fill="#1c2230" text-anchor="middle" textLength="13.4" lengthAdjust="spacingAndGlyphs">abc</text><path d="M.9 11V13.6a.8 .8 0 0 0 1.6 0V11" stroke="#2a3cc8" stroke-width=".9" fill="none"/></svg>
<span class="t" style="left:66px;top:162px;letter-spacing:-0.227px">num_in:i_num_in</span>
<svg class="ic" style="left:46px;top:183px" width="15" height="16" viewBox="0 0 15 16"><rect x=".5" y=".5" width="13.6" height="10" fill="url(#gabc)" stroke="#8a9cb8"/><path d="M.5 10.5H14.1V.5" fill="none" stroke="#6a7c98" stroke-width=".9"/><text x="7.2" y="8.4" font-family="Liberation Sans,sans-serif" font-size="9" fill="#1c2230" text-anchor="middle" textLength="13.4" lengthAdjust="spacingAndGlyphs">abc</text><path d="M.9 11V13.6a.8 .8 0 0 0 1.6 0V11" stroke="#2a3cc8" stroke-width=".9" fill="none"/></svg>
<span class="t" style="left:66px;top:182px;letter-spacing:0.169px">state_ctrl:i_state_ctrl</span>
<div class="sb" style="left:2px;top:308px;width:301px;height:16px"></div>
<div class="arl" style="left:7px;top:312px;border-right-color:#404040"></div>
<div class="arr" style="left:292px;top:312px;border-left-color:#606060"></div>
<div class="thumb" style="left:20px;top:308px;width:56px;height:15px"><i style="left:23px"></i><i style="left:26px"></i><i style="left:29px"></i></div>
<div class="tabA"></div>
<svg class="ic" style="left:12px;top:330px" width="17" height="15" viewBox="0 0 17 15"><path d="M7.4 .6L16.4 9.6 12.6 13.6Z" fill="#b87828" stroke="#8a5a20" stroke-width=".7"/><path d="M7.4 .6L.6 12.8 12.6 13.6Z" fill="url(#gw)" stroke="#b88a18" stroke-width=".9"/><path d="M7.2 5V7M7.2 7L5 11M7.2 7L9.4 11M7.2 7V11M5.8 9.2H8.6" stroke="#c83020" stroke-width=".9" fill="none"/></svg>
<span class="t" style="left:31px;top:329px">Hierarchy</span>
<div class="tabI" style="left:91px;width:64px"></div>
<svg class="ic" style="left:104px;top:329px" width="14" height="17" viewBox="0 0 14 17"><path d="M.6 .6H8.8L12.4 4.2V15.4H.6Z" fill="#f6f8fd" stroke="#7a8cb8" stroke-width=".9"/><path d="M.6 15.4H12.4V4.2" fill="none" stroke="#2a3a6a" stroke-width="1"/><path d="M8.8 .6V4.2H12.4" fill="#e4eaf8" stroke="#7a8cb8" stroke-width=".7"/><path d="M2.4 2.6H7M2.4 4.7H9.8M2.4 6.8H9.8M2.4 8.9H9.8M2.4 11H9.8M2.4 13.1H9.8" stroke="#1c1c9c" stroke-width="1.15"/></svg>
<span class="t" style="left:121.5px;top:328px;letter-spacing:-0.309px">Files</span>
<div class="tabI" style="left:155px;width:103px"></div>
<svg class="ic" style="left:169px;top:331px" width="12" height="12" viewBox="0 0 12 12"><rect x="6" y="0" width="5" height="5.4" fill="url(#gdu)" stroke="#6a88c8" stroke-width=".5"/><rect x="3.6" y="3.8" width="4.6" height="4.8" fill="#f4d838" stroke="#b89c28" stroke-width=".5"/><rect x=".4" y="6.9" width="4" height="4.8" fill="#f8faff" stroke="#6a84c4" stroke-width=".7"/></svg>
<span class="t" style="left:186.5px;top:328px;letter-spacing:-0.196px">Design Units</span>
<div class="tabI" style="left:258px;width:40px"></div>
<svg class="ic" style="left:270px;top:331px" width="5" height="8" viewBox="0 0 5 8"><rect x="0" y="0" width="1.5" height="1.5" fill="#e03020"/><rect x="2.5" y="2.5" width="1.5" height="1.5" fill="#f08020"/><rect x="1" y="6" width="1.5" height="1.5" fill="#e03020"/></svg>
<div class="btn3" style="left:274px"></div><div class="btn3" style="left:290px"></div>
<svg class="ic" style="left:278px;top:333px" width="7" height="11" viewBox="0 0 7 11"><path d="M6.5 .5V10.5L.5 5.5Z" fill="#a8a8a8"/></svg>
<svg class="ic" style="left:294px;top:333px" width="7" height="11" viewBox="0 0 7 11"><path d="M.5 .5V10.5L6.5 5.5Z" fill="#000"/></svg>
<div class="ttl" style="top:357px"></div>
<span class="t" style="left:5px;top:356.5px;letter-spacing:-0.181px">Tasks</span>
<svg class="ic" style="left:264px;top:360px" width="8" height="10" viewBox="0 0 8 10"><path d="M2.3 .5H5.6V6H2.3Z" fill="#f0f0f0" stroke="#1c2836" stroke-width="1"/><path d="M5.2 .5V6" stroke="#1c2836" stroke-width="1.6"/><path d="M.2 6.5H7" stroke="#1c2836" stroke-width="1.2"/><path d="M3.6 7V10" stroke="#1c2836" stroke-width="1"/></svg><svg class="ic" style="left:276px;top:360px" width="9" height="10" viewBox="0 0 9 10"><path d="M3 1H8.5V5.5H3Z" fill="none" stroke="#000" stroke-width="1"/><path d="M3 1.5H8.5" stroke="#000" stroke-width="2"/><path d="M.5 4.5H5.5V9.5H.5Z" fill="#f0f0f0" stroke="#000" stroke-width="1"/><path d="M.5 5H5.5" stroke="#000" stroke-width="2"/></svg><svg class="ic" style="left:290px;top:361px" width="9" height="8" viewBox="0 0 9 8"><path d="M.7 .5L8.3 7.5M8.3 .5L.7 7.5" stroke="#000" stroke-width="1.6"/></svg>
<span class="t" style="left:0px;top:382px;letter-spacing:0.055px">Flow:</span>
<div class="btn" style="left:33px;top:381px;width:192px;height:22px"></div>
<span class="t" style="left:36.5px;top:382px;letter-spacing:-0.269px">Compilation</span>
<svg class="ic" style="left:211px;top:390px" width="8" height="5" viewBox="0 0 8 5"><path d="M0 0H8L4 4.5Z" fill="#000"/></svg>
<div class="btn" style="left:232px;top:382px;width:73px;height:21px"></div>
<span class="t" style="left:237.5px;top:382.5px;letter-spacing:0.042px">Customize...</span>
<div class="pane" style="left:0px;top:410px;width:306px;height:208px;"><div class="hdr" style="top:0;width:304px;height:22px"></div><div class="cs" style="left:39px;top:0;height:164px"></div><div class="cs" style="left:299px;top:0;height:164px"></div><div class="rl" style="top:43px;width:304px"></div><div class="rl" style="top:63px;width:304px"></div><div class="rl" style="top:83px;width:304px"></div><div class="rl" style="top:103px;width:304px"></div><div class="rl" style="top:123px;width:304px"></div><div class="rl" style="top:143px;width:304px"></div><div class="rl" style="top:163px;width:304px"></div><div style="left:302.5px;top:30px;width:1.5px;height:7px;background:#c4c440;border-radius:2px 0 0 2px"></div><div style="left:302.5px;top:50px;width:1.5px;height:7px;background:#c4c440;border-radius:2px 0 0 2px"></div><div style="left:302.5px;top:70px;width:1.5px;height:7px;background:#c4c440;border-radius:2px 0 0 2px"></div><div style="left:302.5px;top:90px;width:1.5px;height:7px;background:#c4c440;border-radius:2px 0 0 2px"></div><div style="left:302.5px;top:110px;width:1.5px;height:7px;background:#c4c440;border-radius:2px 0 0 2px"></div><div style="left:302.5px;top:130px;width:1.5px;height:7px;background:#c4c440;border-radius:2px 0 0 2px"></div></div>
<span class="t" style="left:161px;top:412.5px;letter-spacing:-0.075px">Task</span>
<svg class="ic" style="left:4px;top:439px" width="17" height="13" viewBox="0 0 17 13"><path d="M1 7.2L3.2 5.6 6.2 8.6 14 .8 16 2.6 6.2 12.4Z" fill="#4aa84a" stroke="#2c7c2c" stroke-width=".7"/><path d="M2.2 7.1L6.2 10.9 14.6 2.4" fill="none" stroke="#8fd48f" stroke-width=".9"/></svg>
<svg class="ic" style="left:49px;top:441px" width="7" height="7" viewBox="0 0 7 7"><path d="M6 1V6H1Z" fill="#404040" stroke="#262626" stroke-width=".8"/></svg>
<svg class="ic" style="left:67px;top:439px" width="11" height="11" viewBox="0 0 11 11"><path d="M.8 .6L10.4 5.5 .8 10.4Z" fill="url(#gpl)" stroke="#5a2496" stroke-width=".8"/><path d="M.8 .6V10.4" stroke="#3a2a5a" stroke-width="1"/></svg>
<span class="t" style="left:85.5px;top:435.5px;color:#0a7d0a;letter-spacing:-0.404px">Compile Design</span>
<svg class="ic" style="left:4px;top:459px" width="17" height="13" viewBox="0 0 17 13"><path d="M1 7.2L3.2 5.6 6.2 8.6 14 .8 16 2.6 6.2 12.4Z" fill="#4aa84a" stroke="#2c7c2c" stroke-width=".7"/><path d="M2.2 7.1L6.2 10.9 14.6 2.4" fill="none" stroke="#8fd48f" stroke-width=".9"/></svg>
<svg class="ic" style="left:70px;top:460.5px" width="6" height="9" viewBox="0 0 6 9"><path d="M.5 .5L5 4.5 .5 8.5Z" fill="#fff" stroke="#8a8a8a" stroke-width="1"/></svg>
<svg class="ic" style="left:87px;top:459px" width="11" height="11" viewBox="0 0 11 11"><path d="M.8 .6L10.4 5.5 .8 10.4Z" fill="url(#gpl)" stroke="#5a2496" stroke-width=".8"/><path d="M.8 .6V10.4" stroke="#3a2a5a" stroke-width="1"/></svg>
<span class="t" style="left:106px;top:455.5px;color:#0a7d0a;letter-spacing:-0.216px">Analysis &amp; Synthesis</span>
<svg class="ic" style="left:4px;top:479px" width="17" height="13" viewBox="0 0 17 13"><path d="M1 7.2L3.2 5.6 6.2 8.6 14 .8 16 2.6 6.2 12.4Z" fill="#4aa84a" stroke="#2c7c2c" stroke-width=".7"/><path d="M2.2 7.1L6.2 10.9 14.6 2.4" fill="none" stroke="#8fd48f" stroke-width=".9"/></svg>
<svg class="ic" style="left:70px;top:480.5px" width="6" height="9" viewBox="0 0 6 9"><path d="M.5 .5L5 4.5 .5 8.5Z" fill="#fff" stroke="#8a8a8a" stroke-width="1"/></svg>
<svg class="ic" style="left:87px;top:479px" width="11" height="11" viewBox="0 0 11 11"><path d="M.8 .6L10.4 5.5 .8 10.4Z" fill="url(#gpl)" stroke="#5a2496" stroke-width=".8"/><path d="M.8 .6V10.4" stroke="#3a2a5a" stroke-width="1"/></svg>
<span class="t" style="left:106px;top:475.5px;color:#0a7d0a;letter-spacing:-0.056px">Fitter (Place &amp; Route)</span>
<svg class="ic" style="left:4px;top:499px" width="17" height="13" viewBox="0 0 17 13"><path d="M1 7.2L3.2 5.6 6.2 8.6 14 .8 16 2.6 6.2 12.4Z" fill="#4aa84a" stroke="#2c7c2c" stroke-width=".7"/><path d="M2.2 7.1L6.2 10.9 14.6 2.4" fill="none" stroke="#8fd48f" stroke-width=".9"/></svg>
<svg class="ic" style="left:70px;top:500.5px" width="6" height="9" viewBox="0 0 6 9"><path d="M.5 .5L5 4.5 .5 8.5Z" fill="#fff" stroke="#8a8a8a" stroke-width="1"/></svg>
<svg class="ic" style="left:87px;top:499px" width="11" height="11" viewBox="0 0 11 11"><path d="M.8 .6L10.4 5.5 .8 10.4Z" fill="url(#gpl)" stroke="#5a2496" stroke-width=".8"/><path d="M.8 .6V10.4" stroke="#3a2a5a" stroke-width="1"/></svg>
<span class="t" style="left:106px;top:495.5px;color:#0a7d0a;letter-spacing:-0.181px">Assembler (Generate programming files)</span>
<svg class="ic" style="left:4px;top:519px" width="17" height="13" viewBox="0 0 17 13"><path d="M1 7.2L3.2 5.6 6.2 8.6 14 .8 16 2.6 6.2 12.4Z" fill="#4aa84a" stroke="#2c7c2c" stroke-width=".7"/><path d="M2.2 7.1L6.2 10.9 14.6 2.4" fill="none" stroke="#8fd48f" stroke-width=".9"/></svg>
<svg class="ic" style="left:70px;top:520.5px" width="6" height="9" viewBox="0 0 6 9"><path d="M.5 .5L5 4.5 .5 8.5Z" fill="#fff" stroke="#8a8a8a" stroke-width="1"/></svg>
<svg class="ic" style="left:87px;top:519px" width="11" height="11" viewBox="0 0 11 11"><path d="M.8 .6L10.4 5.5 .8 10.4Z" fill="url(#gpl)" stroke="#5a2496" stroke-width=".8"/><path d="M.8 .6V10.4" stroke="#3a2a5a" stroke-width="1"/></svg>
<span class="t" style="left:106px;top:515.5px;color:#0a7d0a;letter-spacing:-0.244px">TimeQuest Timing Analysis</span>
<svg class="ic" style="left:4px;top:539px" width="17" height="13" viewBox="0 0 17 13"><path d="M1 7.2L3.2 5.6 6.2 8.6 14 .8 16 2.6 6.2 12.4Z" fill="#4aa84a" stroke="#2c7c2c" stroke-width=".7"/><path d="M2.2 7.1L6.2 10.9 14.6 2.4" fill="none" stroke="#8fd48f" stroke-width=".9"/></svg>
<svg class="ic" style="left:70px;top:540.5px" width="6" height="9" viewBox="0 0 6 9"><path d="M.5 .5L5 4.5 .5 8.5Z" fill="#fff" stroke="#8a8a8a" stroke-width="1"/></svg>
<svg class="ic" style="left:87px;top:539px" width="11" height="11" viewBox="0 0 11 11"><path d="M.8 .6L10.4 5.5 .8 10.4Z" fill="url(#gpl)" stroke="#5a2496" stroke-width=".8"/><path d="M.8 .6V10.4" stroke="#3a2a5a" stroke-width="1"/></svg>
<span class="t" style="left:106px;top:535.5px;color:#0a7d0a;letter-spacing:-0.095px">EDA Netlist Writer</span>
<svg class="ic" style="left:64px;top:557px" width="17" height="17" viewBox="0 0 17 17"><path d="M1.6 8.6L8.2 15 14.8 8.6" fill="none" stroke="#0a0a0a" stroke-width="1.9" stroke-dasharray="1.6 .8"/><path d="M8.2 .6L16 7.6 8.2 14.2 .4 7.6Z" fill="url(#gdi)"/><path d="M3.8 .4V9.2H5.6V.4M6.8 .4V9.2H8.6V.4M9.8 4V9.2H11.6V4" fill="#fff" stroke="#1c1c8c" stroke-width=".9"/><path d="M3.8 9.2H11.6" stroke="#1c1c8c" stroke-width="1"/><path d="M1.2 .6L2.6 5.2 5 6.4 6.2 9" fill="none" stroke="#e01848" stroke-width="1.2"/></svg>
<span class="t" style="left:85.5px;top:555.5px;letter-spacing:-0.227px">Program Device (Open Programmer)</span>
<div class="sb" style="left:2px;top:601px;width:303px;height:16px"></div>
<div class="arl" style="left:7px;top:605px"></div><div class="arr" style="left:292px;top:605px;border-left-color:#606060"></div>
<div class="thumb" style="left:19px;top:601px;width:203px;height:15px"><i style="left:96px"></i><i style="left:99px"></i><i style="left:102px"></i></div>
<div class="ttl" style="top:624px"></div>
<span class="t" style="left:5px;top:623.5px;letter-spacing:0.122px">Status</span>
<svg class="ic" style="left:264px;top:627px" width="8" height="10" viewBox="0 0 8 10"><path d="M2.3 .5H5.6V6H2.3Z" fill="#f0f0f0" stroke="#1c2836" stroke-width="1"/><path d="M5.2 .5V6" stroke="#1c2836" stroke-width="1.6"/><path d="M.2 6.5H7" stroke="#1c2836" stroke-width="1.2"/><path d="M3.6 7V10" stroke="#1c2836" stroke-width="1"/></svg><svg class="ic" style="left:276px;top:627px" width="9" height="10" viewBox="0 0 9 10"><path d="M3 1H8.5V5.5H3Z" fill="none" stroke="#000" stroke-width="1"/><path d="M3 1.5H8.5" stroke="#000" stroke-width="2"/><path d="M.5 4.5H5.5V9.5H.5Z" fill="#f0f0f0" stroke="#000" stroke-width="1"/><path d="M.5 5H5.5" stroke="#000" stroke-width="2"/></svg><svg class="ic" style="left:290px;top:628px" width="9" height="8" viewBox="0 0 9 8"><path d="M.7 .5L8.3 7.5M8.3 .5L.7 7.5" stroke="#000" stroke-width="1.6"/></svg>
<div class="pane" style="left:0px;top:643px;width:306px;height:174px;"><div class="hdr" style="top:0;width:304px;height:22px"></div><div class="cs" style="left:154px;top:0;height:22px"></div><div class="cs" style="left:254px;top:0;height:22px"></div><div class="rl" style="top:40px;width:304px"></div><div class="rl" style="top:57px;width:304px"></div><div class="rl" style="top:74px;width:304px"></div><div class="rl" style="top:91px;width:304px"></div><div class="rl" style="top:108px;width:304px"></div><div class="rl" style="top:125px;width:304px"></div></div>
<span class="t" style="left:60.5px;top:645.5px;letter-spacing:-0.296px">Module</span>
<span class="t" style="left:163px;top:645px;font-size:14px;color:#3a5ac0;font-style:italic">%</span>
<span class="t" style="left:193px;top:645.5px;letter-spacing:-0.090px">Progress</span>
<div style="left:302.5px;top:646px;width:2px;height:18px;overflow:hidden"><span class="t" style="left:0px;top:-0.5px">Time</span></div>
<svg class="ic" style="left:262px;top:650px" width="12" height="13" viewBox="0 0 12 13"><rect x="4.6" y="0" width="2.8" height="2.2" rx=".8" fill="#6a8cd4"/><circle cx="6" cy="7" r="5" fill="#a4c0ee" stroke="#4a74c8" stroke-width="1.1"/><circle cx="6" cy="7" r="3.3" fill="#e4ecfa"/><path d="M6 4.8V7.4H7.4" stroke="#3a5ab8" stroke-width=".9" fill="none"/></svg>
<span class="t" style="left:3.5px;top:666.5px;letter-spacing:-0.298px">Full Compilation</span>
<div class="pb" style="top:669px"><i></i><b>100%</b></div>
<span class="t" style="left:258.5px;top:666.5px;letter-spacing:0.367px;width:46px;overflow:hidden">00:00:33</span>
<span class="t" style="left:23.5px;top:683.5px;letter-spacing:-0.216px">Analysis &amp; Synthesis</span>
<div class="pb" style="top:686px"><i></i><b>100%</b></div>
<span class="t" style="left:258.5px;top:683.5px;letter-spacing:0.367px;width:46px;overflow:hidden">00:00:07</span>
<span class="t" style="left:23.5px;top:700.5px;letter-spacing:0.228px">Fitter</span>
<div class="pb" style="top:703px"><i></i><b>100%</b></div>
<span class="t" style="left:258.5px;top:700.5px;letter-spacing:0.367px;width:46px;overflow:hidden">00:00:14</span>
<span class="t" style="left:23.5px;top:717.5px;letter-spacing:-0.371px">Assembler</span>
<div class="pb" style="top:720px"><i></i><b>100%</b></div>
<span class="t" style="left:258.5px;top:717.5px;letter-spacing:0.367px;width:46px;overflow:hidden">00:00:03</span>
<span class="t" style="left:23.5px;top:734.5px;letter-spacing:-0.212px">TimeQuest Timing Analyzer</span>
<div class="pb" style="top:737px"><i></i><b>100%</b></div>
<span class="t" style="left:258.5px;top:734.5px;letter-spacing:0.367px;width:46px;overflow:hidden">00:00:05</span>
<span class="t" style="left:23.5px;top:751.5px;letter-spacing:-0.095px">EDA Netlist Writer</span>
<div class="pb" style="top:754px"><i></i><b>100%</b></div>
<span class="t" style="left:258.5px;top:751.5px;letter-spacing:0.367px;width:46px;overflow:hidden">00:00:04</span>
<div class="sb" style="left:2px;top:800px;width:303px;height:16px"></div>
<div class="arl" style="left:7px;top:804px"></div><div class="arr" style="left:292px;top:804px;border-left-color:#606060"></div>
<div class="thumb" style="left:19px;top:800px;width:229px;height:15px"><i style="left:109px"></i><i style="left:112px"></i><i style="left:115px"></i></div>
</body></html>
